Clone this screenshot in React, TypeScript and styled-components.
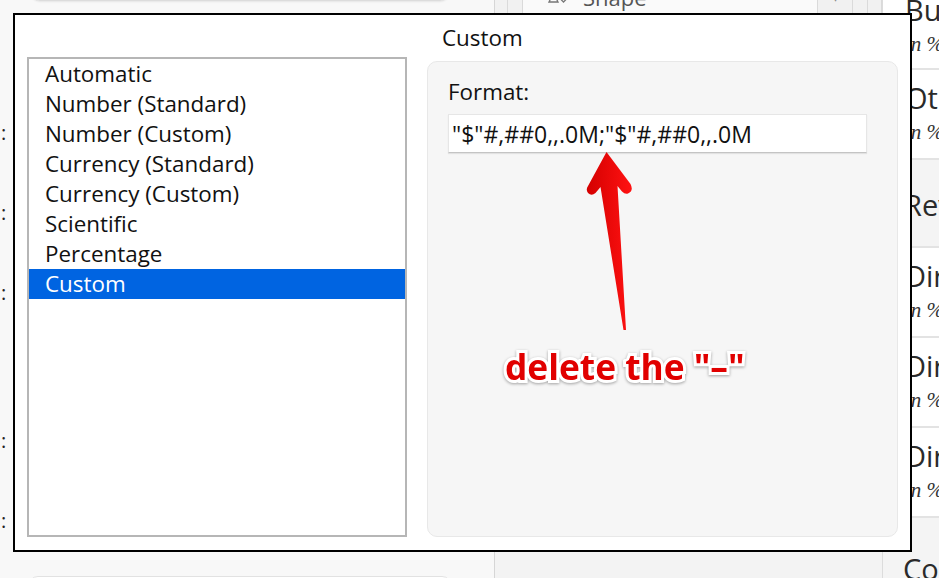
import React from 'react'
import styled, { createGlobalStyle } from 'styled-components'

const GlobalStyle = createGlobalStyle`
  html, body {
    margin: 0;
    padding: 0;
    background: #f8f8f8;
  }
  body {
    font-family: "Open Sans", "Noto Sans", sans-serif;
    color: #111;
  }
`

const formats = [
  'Automatic',
  'Number (Standard)',
  'Number (Custom)',
  'Currency (Standard)',
  'Currency (Custom)',
  'Scientific',
  'Percentage',
  'Custom',
]

const colonRows = [91, 0, 0, 68, 0]

const sideItems = [
  { kind: 'item', title: 'Budget', sub: 'in %' },
  { kind: 'item', title: 'Other', sub: 'in %' },
  { kind: 'section', title: 'Revenue' },
  { kind: 'item', title: 'Direct', sub: 'in %' },
  { kind: 'item', title: 'Direct', sub: 'in %' },
  { kind: 'item', title: 'Direct', sub: 'in %' },
]

const App = () => {
  return (
    <>
      <GlobalStyle />
      <Page>
        <AppShell>
          <LeftPane>
            <TopCard />
            {colonRows.map((gap, i) => (
              <FieldRow key={i} $gap={gap}>
                :
              </FieldRow>
            ))}
            <BottomCard />
          </LeftPane>

          <CenterPane>
            <Toolbar>
              <ToolCell $w={13} />
              <ToolCell $w={15} />
              <ShapeSelect>
                <svg width="21" height="12" viewBox="0 0 21 12">
                  <path d="M1 11 L5.5 2 L10 11 Z" fill="none" stroke="#777" strokeWidth="1.3" />
                  <path d="M15.5 2 L20 6.5 L15.5 11 L11 6.5 Z" fill="none" stroke="#777" strokeWidth="1.3" />
                </svg>
                <span>Shape</span>
              </ShapeSelect>
              <ToolCell $w={35}>▾</ToolCell>
              <ToolCell $w={15} />
              <ToolCell $w={14} />
            </Toolbar>
          </CenterPane>

          <RightPane>
            {sideItems.map((it, i) =>
              it.kind === 'section' ? (
                <SideSection key={i}>{it.title}</SideSection>
              ) : (
                <SideItem key={i} $first={i === 0}>
                  <SideTitle>{it.title}</SideTitle>
                  <SideSub>{it.sub}</SideSub>
                </SideItem>
              )
            )}
            <SideSection $tall>Costs</SideSection>
          </RightPane>
        </AppShell>

        <Dialog>
          <DialogTitle>Custom</DialogTitle>
          <FormatList>
            {formats.map((f) => (
              <FormatItem key={f} $selected={f === 'Custom'}>
                {f}
              </FormatItem>
            ))}
          </FormatList>
          <FormatPanel>
            <FieldLabel>Format:</FieldLabel>
            <FormatInput>"$"#,##0,,.0M;"$"#,##0,,.0M</FormatInput>
          </FormatPanel>
        </Dialog>

        <Annotation width="939" height="578" viewBox="0 0 939 578">
          <defs>
            <linearGradient id="arrowFill" x1="0" y1="0" x2="1" y2="0">
              <stop offset="0" stopColor="#d40000" />
              <stop offset="1" stopColor="#ff1212" />
            </linearGradient>
          </defs>
          <path
            d="M606.5 152 L630.5 184 Q634 191 628 193.5 Q625 194.5 622 191.5 L617.5 186 L626 330 L623.5 330 L600.5 187 L595.5 193 Q591.5 196.5 588 193 Q585.5 189.5 588 186 Z"
            fill="url(#arrowFill)"
          />
        </Annotation>
        <Callout>delete the "–"</Callout>
      </Page>
    </>
  )
}

const Page = styled.div`
  position: relative;
  width: 939px;
  height: 578px;
  overflow: hidden;
  background: #f8f8f8;
`

const AppShell = styled.div`
  display: grid;
  grid-template-columns: 494px 388px 1fr;
  height: 100%;
`

const LeftPane = styled.div`
  display: flex;
  flex-direction: column;
  background: #f8f8f8;
`

const TopCard = styled.div`
  margin: -40px 0 0 30px;
  width: 420px;
  height: 41px;
  background: #fff;
  border: 1px solid #dcdcdc;
  border-radius: 10px;
  box-sizing: border-box;
  box-shadow: 0 1px 2px rgba(0, 0, 0, 0.08);
`

const FieldRow = styled.div<{ $gap: number }>`
  display: flex;
  align-items: center;
  height: 80px;
  margin-top: ${(p) => p.$gap}px;
  padding-left: 1px;
  font-size: 20px;
  color: #222;
`

const BottomCard = styled.div`
  margin: 16px 0 0 28px;
  width: 422px;
  height: 40px;
  background: #fff;
  border: 1px solid #e2e2e2;
  border-radius: 10px;
`

const CenterPane = styled.div`
  background: #f3f3f3;
  border-left: 1px solid #d6d6d6;
`

const Toolbar = styled.div`
  display: flex;
  margin-top: -26px;
  height: 40px;
  background: #f1f1f1;
`

const ToolCell = styled.div<{ $w: number }>`
  width: ${(p) => p.$w}px;
  border-right: 1px solid #dadada;
  display: flex;
  justify-content: center;
  align-items: flex-end;
  color: #888;
  font-size: 14px;
  line-height: 1;
  padding-bottom: 10px;
  box-sizing: border-box;
`

const ShapeSelect = styled.div`
  width: 296px;
  display: flex;
  align-items: center;
  gap: 14px;
  padding: 6px 0 0 25px;
  box-sizing: border-box;
  background: #fafafa;
  border-right: 1px solid #dadada;
  font-size: 22px;
  color: #555;
`

const RightPane = styled.div`
  display: flex;
  flex-direction: column;
  background: #fff;
  border-left: 1px solid #dcdcdc;
  color: #2a2a2a;
`

const SideItem = styled.div<{ $first?: boolean }>`
  height: ${(p) => (p.$first ? 88 : 90)}px;
  margin-top: ${(p) => (p.$first ? -18 : 0)}px;
  padding: 11px 0 0 22px;
  box-sizing: border-box;
  border-bottom: 2px solid #e3e3e3;
  white-space: nowrap;
`

const SideTitle = styled.div`
  font-size: 29px;
  line-height: 34px;
`

const SideSub = styled.div`
  margin-top: 4px;
  font-family: "Liberation Serif", serif;
  font-style: italic;
  font-size: 21px;
  line-height: 26px;
  color: #333;
`

const SideSection = styled.div<{ $tall?: boolean }>`
  height: ${(p) => (p.$tall ? 80 : 88)}px;
  display: flex;
  align-items: ${(p) => (p.$tall ? 'flex-start' : 'center')};
  padding: ${(p) => (p.$tall ? '34px 0 0 20px' : '4px 0 0 21px')};
  box-sizing: border-box;
  background: #f4f4f4;
  border-bottom: 2px solid #e3e3e3;
  font-size: 29px;
  line-height: 34px;
  white-space: nowrap;
`

const Dialog = styled.div`
  position: absolute;
  left: 13px;
  top: 13px;
  width: 899px;
  height: 539px;
  box-sizing: border-box;
  border: 2px solid #000;
  background: #fff;
  padding: 0 12px 13px 12px;
  display: grid;
  grid-template-columns: 380px 471px;
  grid-template-rows: 42px 1fr;
  column-gap: 20px;
  font-size: 22.4px;
`

const DialogTitle = styled.div`
  grid-column: 2;
  grid-row: 1;
  padding: 2px 0 0 15px;
  line-height: 42px;
`

const FormatList = styled.div`
  grid-column: 1;
  grid-row: 2;
  border: 2px solid #b6b6b6;
  background: #fff;
`

const FormatItem = styled.div<{ $selected?: boolean }>`
  height: 30px;
  line-height: 29px;
  padding-left: 16px;
  background: ${(p) => (p.$selected ? '#0064e1' : 'transparent')};
  color: ${(p) => (p.$selected ? '#fff' : '#111')};
`

const FormatPanel = styled.div`
  grid-column: 2;
  grid-row: 2;
  margin-top: 4px;
  padding: 18px 30px 0 20px;
  background: #f6f6f6;
  border: 1px solid #e8e8e8;
  border-radius: 10px;
  display: flex;
  flex-direction: column;
  gap: 10px;
`

const FieldLabel = styled.div`
  line-height: 24px;
`

const FormatInput = styled.div`
  height: 39px;
  box-sizing: border-box;
  padding-left: 3px;
  line-height: 38px;
  font-size: 23px;
  background: #fff;
  border: 1px solid #e6e6e6;
  border-bottom-color: #c4c4c4;
  box-shadow: 0 1px 1px rgba(0, 0, 0, 0.08);
  white-space: nowrap;
`

const Annotation = styled.svg`
  position: absolute;
  left: 0;
  top: 0;
  pointer-events: none;
`

const Callout = styled.div`
  position: absolute;
  left: 505px;
  top: 342px;
  font-family: "Open Sans", sans-serif;
  font-weight: 700;
  font-size: 35.3px;
  line-height: 48px;
  color: #e10000;
  -webkit-text-stroke: 6px #fff;
  paint-order: stroke fill;
  filter: drop-shadow(0 1px 1.5px rgba(0, 0, 0, 0.35));
  white-space: nowrap;
`

export default App
